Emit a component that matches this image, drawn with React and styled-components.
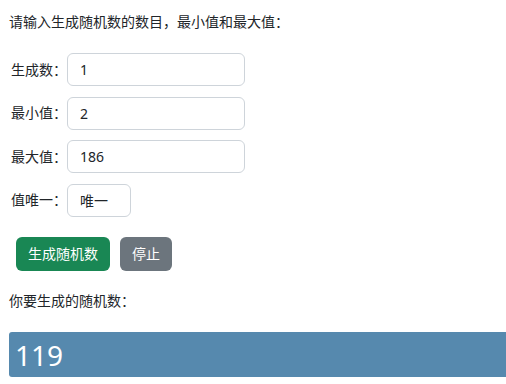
import React from "react";
import styled, { createGlobalStyle } from "styled-components";

const Global = createGlobalStyle`
  html, body { margin: 0; padding: 0; background: #fff; overflow: hidden; }
  body {
    font-family: "Noto Sans", "Noto Sans CJK SC", sans-serif;
    font-size: 14px;
    color: #212529;
  }
`;

const Page = styled.div`
  padding-top: 12px;
  display: flex;
  flex-direction: column;
`;

const Text = styled.p`
  margin: 0 0 0 ${(p) => p.$indent || 9}px;
  line-height: 20px;
  height: 20px;
`;

const Form = styled.div`
  margin-top: 21px;
  display: flex;
  flex-direction: column;
  gap: 10.5px;
`;

const Row = styled.div`
  display: flex;
  align-items: center;
  padding-left: 11px;
`;

const Label = styled.label`
  width: 56px;
  line-height: 20px;
  white-space: nowrap;
`;

const Input = styled.div`
  box-sizing: border-box;
  width: ${(p) => p.$w}px;
  height: 33px;
  border: 1px solid #ced4da;
  border-radius: 6px;
  padding: 0 12px;
  display: flex;
  align-items: center;
  font-size: 14px;
  color: #212529;
  background: #fff;
`;

const Buttons = styled.div`
  margin: 20.5px 0 20px 16px;
  display: flex;
  gap: 10px;
`;

const Button = styled.button`
  box-sizing: border-box;
  height: 34px;
  padding: 0 12px;
  border: none;
  border-radius: 6px;
  background: ${(p) => (p.$variant === "success" ? "#198754" : "#6c757d")};
  color: #fff;
  font-family: inherit;
  font-size: 14px;
  line-height: 20px;
  cursor: pointer;
`;

const Result = styled.div`
  margin: 21px 0 0 9px;
  height: 45px;
  background: #5689ae;
  border-radius: 3px 0 0 3px;
  color: #fff;
  font-size: 28px;
  display: flex;
  align-items: center;
  padding-left: 6px;
`;

const fields = [
  { label: "生成数：", value: "1", w: 178 },
  { label: "最小值：", value: "2", w: 178 },
  { label: "最大值：", value: "186", w: 178 },
  { label: "值唯一：", value: "唯一", w: 64 },
];

export default function App() {
  return (
    <>
      <Global />
      <Page>
        <Text>请输入生成随机数的数目，最小值和最大值：</Text>
        <Form>
          {fields.map((f) => (
            <Row key={f.label}>
              <Label>{f.label}</Label>
              <Input $w={f.w}>{f.value}</Input>
            </Row>
          ))}
        </Form>
        <Buttons>
          <Button $variant="success">生成随机数</Button>
          <Button $variant="secondary">停止</Button>
        </Buttons>
        <Text>你要生成的随机数：</Text>
        <Result>119</Result>
      </Page>
    </>
  );
}
